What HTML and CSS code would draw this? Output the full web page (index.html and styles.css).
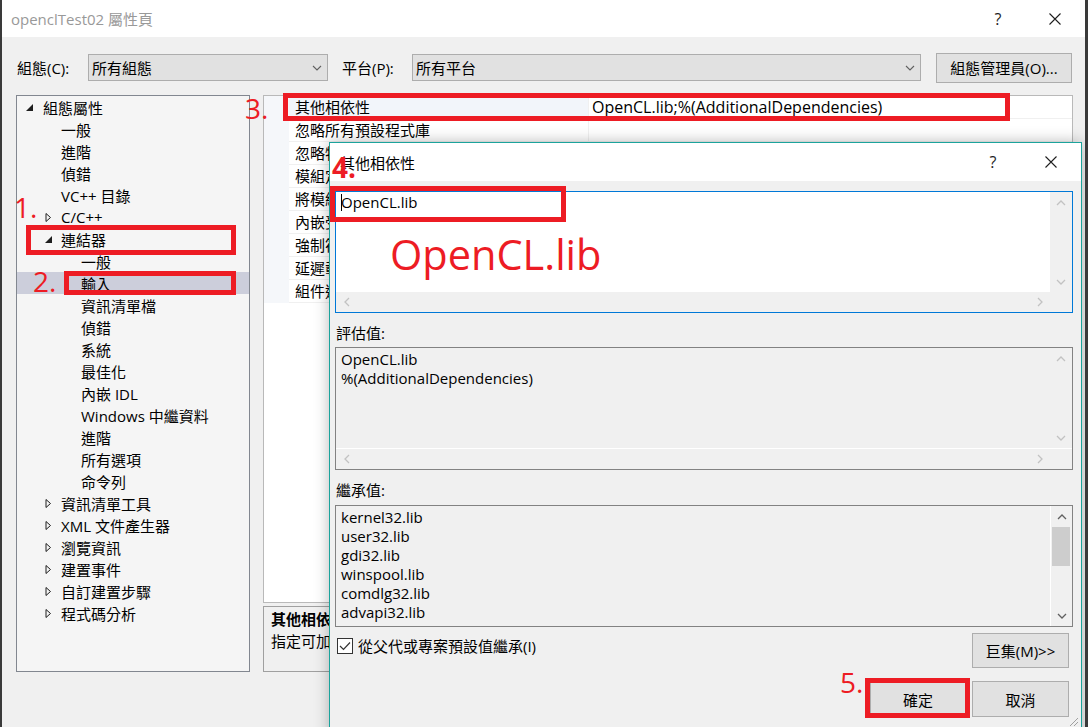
FILE: index.html
```html
<!DOCTYPE html>
<html lang="zh-Hant">
<head>
<meta charset="utf-8">
<title>openclTest02 屬性頁</title>
<link rel="stylesheet" href="styles.css">
</head>
<body>
<div class="window">
  <header class="titlebar">
    <span class="title">openclTest02 屬性頁</span>
    <div class="caption-btns">
      <span class="cap-btn help">?</span>
      <span class="cap-btn close"><svg width="12" height="12" viewBox="0 0 12 12"><path d="M0.5 0.5 L11.5 11.5 M11.5 0.5 L0.5 11.5" stroke="#1e1e1e" stroke-width="1.1" fill="none"/></svg></span>
    </div>
  </header>

  <div class="client">
    <div class="toolbar">
      <span class="tb-label lbl-config">組態(C):</span>
      <div class="combo combo-config"><span>所有組態</span><svg class="chev" width="10" height="6" viewBox="0 0 10 6"><path d="M1 1 L5 5 L9 1" fill="none" stroke="#606060" stroke-width="1.1"/></svg></div>
      <span class="tb-label lbl-platform">平台(P):</span>
      <div class="combo combo-platform"><span>所有平台</span><svg class="chev" width="10" height="6" viewBox="0 0 10 6"><path d="M1 1 L5 5 L9 1" fill="none" stroke="#606060" stroke-width="1.1"/></svg></div>
      <div class="btn btn-mgr">組態管理員(O)...</div>
    </div>

    <div class="main">
      <div class="tree">
        <div class="node lvl0"><span class="twisty"><svg width="9" height="9" viewBox="0 0 9 9"><path d="M8 1 L8 8 L1 8 Z" fill="#1e1e1e"/></svg></span><span>組態屬性</span></div>
        <div class="node lvl1"><span class="twisty"></span><span>一般</span></div>
        <div class="node lvl1"><span class="twisty"></span><span>進階</span></div>
        <div class="node lvl1"><span class="twisty"></span><span>偵錯</span></div>
        <div class="node lvl1"><span class="twisty"></span><span>VC++ 目錄</span></div>
        <div class="node lvl1"><span class="twisty"><svg width="9" height="9" viewBox="0 0 9 9"><path d="M3 0.5 L7.5 4.5 L3 8.5 Z" fill="none" stroke="#1e1e1e" stroke-width="1"/></svg></span><span>C/C++</span></div>
        <div class="node lvl1"><span class="twisty"><svg width="9" height="9" viewBox="0 0 9 9"><path d="M9 1 L9 8 L2 8 Z" fill="#1e1e1e"/></svg></span><span>連結器</span></div>
        <div class="node lvl2"><span class="twisty"></span><span>一般</span></div>
        <div class="node lvl2 sel"><span class="twisty"></span><span>輸入</span></div>
        <div class="node lvl2"><span class="twisty"></span><span>資訊清單檔</span></div>
        <div class="node lvl2"><span class="twisty"></span><span>偵錯</span></div>
        <div class="node lvl2"><span class="twisty"></span><span>系統</span></div>
        <div class="node lvl2"><span class="twisty"></span><span>最佳化</span></div>
        <div class="node lvl2"><span class="twisty"></span><span>內嵌 IDL</span></div>
        <div class="node lvl2"><span class="twisty"></span><span>Windows 中繼資料</span></div>
        <div class="node lvl2"><span class="twisty"></span><span>進階</span></div>
        <div class="node lvl2"><span class="twisty"></span><span>所有選項</span></div>
        <div class="node lvl2"><span class="twisty"></span><span>命令列</span></div>
        <div class="node lvl1"><span class="twisty"><svg width="9" height="9" viewBox="0 0 9 9"><path d="M3 0.5 L7.5 4.5 L3 8.5 Z" fill="none" stroke="#1e1e1e" stroke-width="1"/></svg></span><span>資訊清單工具</span></div>
        <div class="node lvl1"><span class="twisty"><svg width="9" height="9" viewBox="0 0 9 9"><path d="M3 0.5 L7.5 4.5 L3 8.5 Z" fill="none" stroke="#1e1e1e" stroke-width="1"/></svg></span><span>XML 文件產生器</span></div>
        <div class="node lvl1"><span class="twisty"><svg width="9" height="9" viewBox="0 0 9 9"><path d="M3 0.5 L7.5 4.5 L3 8.5 Z" fill="none" stroke="#1e1e1e" stroke-width="1"/></svg></span><span>瀏覽資訊</span></div>
        <div class="node lvl1"><span class="twisty"><svg width="9" height="9" viewBox="0 0 9 9"><path d="M3 0.5 L7.5 4.5 L3 8.5 Z" fill="none" stroke="#1e1e1e" stroke-width="1"/></svg></span><span>建置事件</span></div>
        <div class="node lvl1"><span class="twisty"><svg width="9" height="9" viewBox="0 0 9 9"><path d="M3 0.5 L7.5 4.5 L3 8.5 Z" fill="none" stroke="#1e1e1e" stroke-width="1"/></svg></span><span>自訂建置步驟</span></div>
        <div class="node lvl1"><span class="twisty"><svg width="9" height="9" viewBox="0 0 9 9"><path d="M3 0.5 L7.5 4.5 L3 8.5 Z" fill="none" stroke="#1e1e1e" stroke-width="1"/></svg></span><span>程式碼分析</span></div>
      </div>

      <div class="right">
        <div class="grid">
          <div class="prow sel"><span class="gut"></span><span class="pname">其他相依性</span><span class="pval">OpenCL.lib;%(AdditionalDependencies)</span></div>
          <div class="prow"><span class="gut"></span><span class="pname">忽略所有預設程式庫</span><span class="pval"></span></div>
          <div class="prow"><span class="gut"></span><span class="pname">忽略特定預設程式庫</span><span class="pval"></span></div>
          <div class="prow"><span class="gut"></span><span class="pname">模組定義檔</span><span class="pval"></span></div>
          <div class="prow"><span class="gut"></span><span class="pname">將模組加入組件</span><span class="pval"></span></div>
          <div class="prow"><span class="gut"></span><span class="pname">內嵌受控資源檔</span><span class="pval"></span></div>
          <div class="prow"><span class="gut"></span><span class="pname">強制符號參考</span><span class="pval"></span></div>
          <div class="prow"><span class="gut"></span><span class="pname">延遲載入的 DLL</span><span class="pval"></span></div>
          <div class="prow"><span class="gut"></span><span class="pname">組件連結資源</span><span class="pval"></span></div>
        </div>
        <div class="desc">
          <div class="desc-title">其他相依性</div>
          <div class="desc-text">指定可加入連結命令列的其他項目。</div>
        </div>
      </div>
    </div>
  </div>

  <div class="dialog">
    <div class="dlg-title">
      <span class="dlg-caption">其他相依性</span>
      <div class="caption-btns dlg-btns">
        <span class="cap-btn help">?</span>
        <span class="cap-btn close"><svg width="12" height="12" viewBox="0 0 12 12"><path d="M0.5 0.5 L11.5 11.5 M11.5 0.5 L0.5 11.5" stroke="#1e1e1e" stroke-width="1.1" fill="none"/></svg></span>
      </div>
    </div>
    <div class="dlg-body">
      <div class="editbox">
        <div class="box-main">
          <div class="eb-content"><span class="caret"></span>OpenCL.lib</div>
          <div class="vscroll">
            <span class="sb-btn"><svg width="10" height="6" viewBox="0 0 10 6"><path d="M1 5 L5 1 L9 5" fill="none" stroke="#c2c2c2" stroke-width="1.3"/></svg></span>
            <span class="sb-btn"><svg width="10" height="6" viewBox="0 0 10 6"><path d="M1 1 L5 5 L9 1" fill="none" stroke="#c2c2c2" stroke-width="1.3"/></svg></span>
          </div>
        </div>
        <div class="hscroll">
          <span class="sb-btn"><svg width="6" height="10" viewBox="0 0 6 10"><path d="M5 1 L1 5 L5 9" fill="none" stroke="#c2c2c2" stroke-width="1.3"/></svg></span>
          <span class="sb-fill"></span>
          <span class="sb-btn"><svg width="6" height="10" viewBox="0 0 6 10"><path d="M1 1 L5 5 L1 9" fill="none" stroke="#c2c2c2" stroke-width="1.3"/></svg></span>
          <span class="sb-corner"></span>
        </div>
      </div>

      <div class="section-label">評估值:</div>
      <div class="listbox eval">
        <div class="box-main sep-bottom">
          <div class="lb-content">OpenCL.lib<br>%(AdditionalDependencies)</div>
          <div class="vscroll">
            <span class="sb-btn"><svg width="10" height="6" viewBox="0 0 10 6"><path d="M1 5 L5 1 L9 5" fill="none" stroke="#c2c2c2" stroke-width="1.3"/></svg></span>
            <span class="sb-btn"><svg width="10" height="6" viewBox="0 0 10 6"><path d="M1 1 L5 5 L9 1" fill="none" stroke="#c2c2c2" stroke-width="1.3"/></svg></span>
          </div>
        </div>
        <div class="hscroll">
          <span class="sb-btn"><svg width="6" height="10" viewBox="0 0 6 10"><path d="M5 1 L1 5 L5 9" fill="none" stroke="#c2c2c2" stroke-width="1.3"/></svg></span>
          <span class="sb-fill"></span>
          <span class="sb-btn"><svg width="6" height="10" viewBox="0 0 6 10"><path d="M1 1 L5 5 L1 9" fill="none" stroke="#c2c2c2" stroke-width="1.3"/></svg></span>
          <span class="sb-corner"></span>
        </div>
      </div>

      <div class="section-label">繼承值:</div>
      <div class="listbox inherit">
        <div class="box-main">
          <div class="lb-content">kernel32.lib<br>user32.lib<br>gdi32.lib<br>winspool.lib<br>comdlg32.lib<br>advapi32.lib</div>
          <div class="vscroll active">
            <span class="sb-btn"><svg width="10" height="6" viewBox="0 0 10 6"><path d="M1 5 L5 1 L9 5" fill="none" stroke="#606060" stroke-width="1.3"/></svg></span>
            <span class="sb-thumb"></span>
            <span class="sb-fill"></span>
            <span class="sb-btn"><svg width="10" height="6" viewBox="0 0 10 6"><path d="M1 1 L5 5 L9 1" fill="none" stroke="#606060" stroke-width="1.3"/></svg></span>
          </div>
        </div>
      </div>

      <div class="opt-row">
        <label class="chk"><span class="chk-box"><svg width="12" height="10" viewBox="0 0 12 10"><path d="M1 5 L4.5 8.5 L11 1.5" fill="none" stroke="#333" stroke-width="1.2"/></svg></span><span>從父代或專案預設值繼承(I)</span></label>
        <div class="btn btn-dlg">巨集(M)&gt;&gt;</div>
      </div>

      <div class="btn-row">
        <div class="btn btn-dlg btn-ok">確定</div>
        <div class="btn btn-dlg">取消</div>
      </div>
    </div>
    <svg class="grip" width="12" height="12" viewBox="0 0 12 12"><path d="M11 3 L3 11 M11 7 L7 11" stroke="#a0a0a0" stroke-width="1"/></svg>
  </div>

  <div class="anno-box box1"></div>
  <div class="anno-box box2"></div>
  <div class="anno-box box3"></div>
  <div class="anno-box box4"></div>
  <div class="anno-box box5"></div>
  <span class="anno-num num1">1.</span>
  <span class="anno-num num2">2.</span>
  <span class="anno-num num3">3.</span>
  <span class="anno-num num4">4.</span>
  <span class="anno-num num5">5.</span>
  <span class="anno-big">OpenCL.lib</span>
</div>
</body>
</html>
```

FILE: styles.css
```css
* { box-sizing: border-box; }
html, body { margin: 0; padding: 0; }
body {
  width: 1088px;
  height: 727px;
  overflow: hidden;
  background: #3a3a3a;
  font-family: "Segoe UI", "Open Sans", "Noto Sans CJK TC", sans-serif;
  font-size: 15px;
  color: #000;
}
.window {
  position: relative;
  margin-left: 2px;
  width: 1083px;
  height: 727px;
  background: #f0f0f0;
  overflow: hidden;
}

/* caption bars */
.titlebar {
  height: 37px;
  background: #fff;
  display: flex;
  align-items: center;
  justify-content: space-between;
  padding: 0 7px 0 9px;
}
.title { color: #999; font-size: 15px; }
.caption-btns { display: flex; gap: 11px; height: 100%; }
.cap-btn {
  width: 46px;
  display: flex;
  align-items: center;
  justify-content: center;
  font-size: 16px;
  color: #1e1e1e;
}

/* client */
.client { padding: 15px 0 0 14px; }
.toolbar { display: flex; align-items: center; height: 31px; }
.tb-label { padding-left: 1px; white-space: nowrap; }
.lbl-config { width: 72px; }
.lbl-platform { width: 71px; margin-left: 13px; }
.combo {
  height: 27px;
  background: #e1e1e1;
  border: 1px solid #adadad;
  display: flex;
  align-items: center;
  justify-content: space-between;
  padding: 0 5px 0 3px;
}
.combo-config { width: 240px; }
.combo-platform { width: 509px; }
.btn {
  background: #e1e1e1;
  border: 1px solid #adadad;
  display: flex;
  align-items: center;
  justify-content: center;
  white-space: nowrap;
}
.btn-mgr { width: 136px; height: 30px; margin-left: 15px; }

.main { display: flex; gap: 13px; margin-top: 12px; height: 577px; }

/* tree */
.tree { width: 234px; border: 1px solid #828790; background: #f5f5f5; }
.node { display: flex; align-items: center; height: 22px; white-space: nowrap; }
.lvl0 { padding-left: 8px; }
.lvl1 { padding-left: 26px; }
.lvl2 { padding-left: 46px; }
.twisty { width: 18px; height: 22px; display: flex; align-items: center; flex: none; }
.node.sel { background: #cccedb; }

/* property grid */
.right { width: 810px; display: flex; flex-direction: column; gap: 3px; }
.grid { height: 508px; border: 1px solid #b9b9b9; background: #fff; overflow: hidden; }
.prow { display: flex; height: 23px; }
.gut { width: 25px; background: #f5f7fa; flex: none; }
.pname {
  width: 300px;
  flex: none;
  padding-left: 6px;
  line-height: 22px;
  border-bottom: 1px solid #f0f0f0;
  border-right: 1px solid #f0f0f0;
  white-space: nowrap;
  overflow: hidden;
}
.pval {
  flex: 1;
  padding-left: 3px;
  line-height: 22px;
  font-size: 16px;
  border-bottom: 1px solid #f0f0f0;
  white-space: nowrap;
}
.prow.sel .pname { background: #f2f5fa; }

.desc {
  height: 66px;
  border: 1px solid #a0a0a0;
  background: #f0f0f0;
  padding: 1px 7px;
  line-height: 22px;
  white-space: nowrap;
  overflow: hidden;
}
.desc-title { font-weight: 600; }

/* dialog */
.dialog {
  position: absolute;
  left: 327px;
  top: 142px;
  width: 753px;
  height: 598px;
  border: 1px solid #1ba39c;
  background: #f0f0f0;
  box-shadow: 0 0 14px rgba(0, 0, 0, 0.28);
}
.dlg-title {
  height: 38px;
  background: #fff;
  display: flex;
  align-items: center;
  justify-content: space-between;
  padding: 0 7px 0 10px;
}
.dlg-btns { gap: 12px; }
.dlg-body { padding: 10px 8px 0 5px; display: flex; flex-direction: column; }

.editbox {
  height: 122px;
  border: 1px solid #0078d7;
  display: flex;
  flex-direction: column;
}
.box-main { flex: 1; display: flex; min-height: 0; }
.eb-content {
  flex: 1;
  background: #fff;
  padding-left: 5px;
  line-height: 20px;
  display: flex;
  align-items: flex-start;
}
.caret {
  width: 1px;
  height: 17px;
  margin-top: 2px;
  background: #000;
  margin-right: -1px;
}
.vscroll {
  width: 22px;
  flex: none;
  background: #f0f0f0;
  display: flex;
  flex-direction: column;
  justify-content: space-between;
}
.sb-btn {
  height: 21px;
  min-width: 21px;
  display: flex;
  align-items: center;
  justify-content: center;
  flex: none;
}
.hscroll {
  height: 20px;
  flex: none;
  background: #f0f0f0;
  display: flex;
  align-items: center;
}
.sb-fill { flex: 1; }
.sb-corner { width: 22px; height: 100%; flex: none; }

.section-label { margin-top: 10px; height: 20px; line-height: 20px; padding-left: 1px; }
.listbox {
  margin-top: 4px;
  height: 123px;
  border: 1px solid #828282;
  background: #f0f0f0;
  display: flex;
  flex-direction: column;
}
.listbox.inherit { margin-top: 5px; height: 122px; }
.sep-bottom { border-bottom: 1px solid #fff; }
.lb-content { flex: 1; padding: 2px 0 0 5px; line-height: 19px; white-space: nowrap; }
.vscroll.active { border-left: 1px solid #fff; justify-content: flex-start; }
.sb-thumb { height: 39px; margin: 0 2px 0 1px; background: #cdcdcd; flex: none; }
.vscroll.active .sb-fill { flex: 1; }

.opt-row {
  margin-top: 6px;
  display: flex;
  justify-content: space-between;
  align-items: flex-start;
  padding-right: 4px;
}
.chk {
  display: flex;
  align-items: center;
  gap: 5px;
  margin-top: 3px;
  line-height: 20px;
  padding-left: 2px;
}
.chk-box {
  width: 16px;
  height: 16px;
  border: 1px solid #333;
  background: #fff;
  display: flex;
  align-items: center;
  justify-content: center;
}
.btn-dlg { width: 97px; height: 35px; }
.btn-row {
  margin-top: 13px;
  display: flex;
  justify-content: flex-end;
  gap: 5px;
  padding-right: 4px;
}
.btn-row .btn-dlg { height: 36px; }
.btn-ok { border-right: 2px solid #0078d7; }
.grip { position: absolute; right: 2px; top: 572px; }

/* annotations */
.anno-box {
  position: absolute;
  border: 5px solid #ed1c24;
}
.box1 { left: 24px; top: 225px; width: 210px; height: 30px; }
.box2 { left: 62px; top: 271px; width: 172px; height: 24px; }
.box3 { left: 281px; top: 93px; width: 727px; height: 28px; }
.box4 { left: 328px; top: 186px; width: 236px; height: 36px; }
.box5 { left: 863px; top: 678px; width: 105px; height: 40px; }

.anno-num {
  position: absolute;
  font-family: "Open Sans", "Liberation Sans", sans-serif;
  font-size: 28px;
  line-height: 28px;
  color: #ed1c24;
}
.num1 { left: 12px; top: 193px; }
.num2 { left: 31px; top: 267px; }
.num3 { left: 243px; top: 94px; }
.num4 { left: 330px; top: 153px; font-weight: 700; }
.num5 { left: 838px; top: 668px; }
.anno-big {
  position: absolute;
  left: 388px;
  top: 234px;
  font-family: "Open Sans", "Liberation Sans", sans-serif;
  font-size: 41.5px;
  line-height: 40px;
  color: #ed1c24;
}
```
